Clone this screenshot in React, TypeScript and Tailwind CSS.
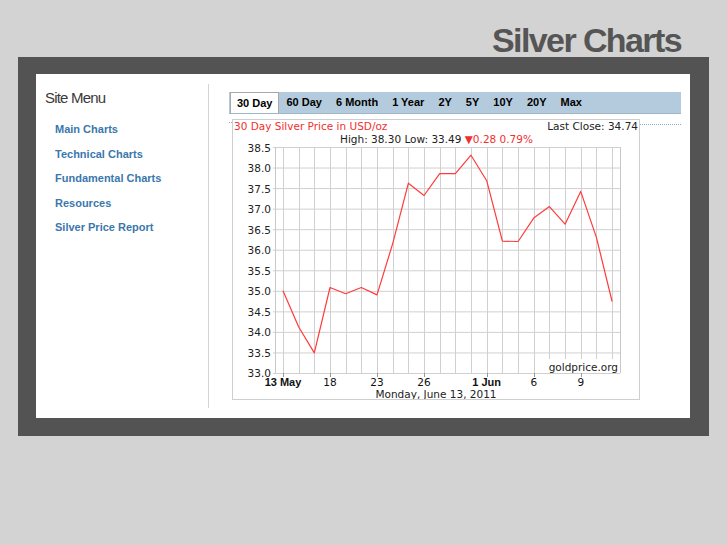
const links = ["Main Charts", "Technical Charts", "Fundamental Charts", "Resources", "Silver Price Report"]
const tabs = ["30 Day", "60 Day", "6 Month", "1 Year", "2Y", "5Y", "10Y", "20Y", "Max"]

const prices = [
    35.0, 34.12, 33.49, 35.08, 34.93, 35.08, 34.9, 36.15, 37.62, 37.32, 37.85,
    37.85, 38.3, 37.68, 36.21, 36.2, 36.77, 37.05, 36.62, 37.42, 36.3, 34.74,
]

const px = (i: number) => 50 + 15.67 * i
const py = (v: number) => 27 + (38.5 - v) * 41.09

const Chart = () => {
    const yTicks = Array.from({ length: 12 }, (_, i) => 38.5 - i * 0.5)
    const xLabels: [number, string, boolean][] = [
        [0, "13 May", true],
        [3, "18", false],
        [6, "23", false],
        [9, "26", false],
        [13, "1 Jun", true],
        [16, "6", false],
        [19, "9", false],
    ]
    const line = prices.map((v, i) => `${px(i).toFixed(1)},${py(v).toFixed(1)}`).join(" ")
    return (
        <svg width="406" height="279" viewBox="0 0 406 279" fontFamily="'DejaVu Sans', Verdana, sans-serif" fontSize="10.5">
            <rect width="406" height="279" fill="#fff" />
            {yTicks.map((v) => (
                <g key={v}>
                    <line x1="40" x2="387" y1={py(v) + 0.5} y2={py(v) + 0.5} stroke="#d0d0d0" />
                    <text x="38" y={py(v) + 4.5} textAnchor="end" fill="#222">
                        {v.toFixed(1)}
                    </text>
                </g>
            ))}
            {prices.map((_, i) => (
                <line key={i} x1={Math.round(px(i)) + 0.5} x2={Math.round(px(i)) + 0.5} y1="27" y2="253" stroke="#d0d0d0" />
            ))}
            <line x1="42.5" x2="42.5" y1="27" y2="253" stroke="#c8c8c8" />
            <line x1="387.5" x2="387.5" y1="27" y2="253" stroke="#c8c8c8" />
            {xLabels.map(([i]) => (
                <line key={i} x1={Math.round(px(i)) + 0.5} x2={Math.round(px(i)) + 0.5} y1="253" y2="257" stroke="#999" />
            ))}
            <polyline points={line} fill="none" stroke="#ff3b3b" strokeWidth="1.2" strokeLinejoin="round" />
            <rect x="315" y="239" width="71" height="14" fill="#fff" />
            <text x="385" y="251" textAnchor="end" fill="#222">goldprice.org</text>
            <text x="1" y="10" fill="#f03030">30 Day Silver Price in USD/oz</text>
            <text x="405" y="10" textAnchor="end" fill="#222">Last Close: 34.74</text>
            <text x="107" y="23" fill="#222">
                High: 38.30 Low: 33.49{" "}
                <tspan fill="#f03030">▼0.28 0.79%</tspan>
            </text>
            {xLabels.map(([i, label, bold]) => (
                <text
                    key={label}
                    x={px(i)}
                    y="266"
                    textAnchor="middle"
                    fill="#111"
                    fontWeight={bold ? "bold" : "normal"}
                    fontFamily={bold ? "'Liberation Sans', Arial, sans-serif" : undefined}
                    fontSize={bold ? "11" : "10.5"}
                >
                    {label}
                </text>
            ))}
            <text x="203" y="278" textAnchor="middle" fill="#222">Monday, June 13, 2011</text>
        </svg>
    )
}

export default function App() {
    return (
        <div className="min-h-[545px] w-[727px] bg-[#d3d3d3] font-['Liberation_Sans',Arial,sans-serif]">
            <header className="flex h-[57px] items-end justify-end pr-[46px]">
                <h1 className="text-[34px] leading-none font-bold tracking-[-1.6px] text-[#555]">Silver Charts</h1>
            </header>
            <div className="ml-[18px] w-[691px] bg-[#535353] pt-[17px] pr-[19px] pb-[18px] pl-[18px]">
                <div className="flex h-[344px] bg-white py-[10px]">
                    <aside className="w-[173px] border-r border-[#d4d4d4] pl-[9px]">
                        <h2 className="mt-[5px] text-[15px] leading-[18px] tracking-[-0.8px] text-[#3a3a3a]">Site Menu</h2>
                        <ul className="mt-[10px] pl-[10px]">
                            {links.map((l) => (
                                <li key={l} className="text-[11px] leading-[24.5px] font-bold text-[#3b77ad]">
                                    {l}
                                </li>
                            ))}
                        </ul>
                    </aside>
                    <main className="flex-1 pt-[8px] pr-[9px] pl-[20px]">
                        <nav className="flex h-[22px] border-b border-[#9fb6c6] bg-[#b3cbdc] pl-[1px]">
                            {tabs.map((t, i) => (
                                <span
                                    key={t}
                                    className={
                                        i === 0
                                            ? "flex items-center border border-b-0 border-[#a8a8a8] bg-white px-[6px] text-[11px] font-bold text-black"
                                            : "flex items-center border border-transparent px-[6px] text-[11px] font-bold text-black"
                                    }
                                >
                                    {t}
                                </span>
                            ))}
                        </nav>
                        <div className="mt-[5px] flex">
                            <div className="mt-[3px] h-0 w-[3px] border-t border-dotted border-[#8fb0cc]" />
                            <div className="border border-[#cfcfcf]">
                                <Chart />
                            </div>
                            <div className="mt-[5px] h-0 flex-1 border-t border-dotted border-[#8fb0cc]" />
                        </div>
                    </main>
                </div>
            </div>
        </div>
    )
}
